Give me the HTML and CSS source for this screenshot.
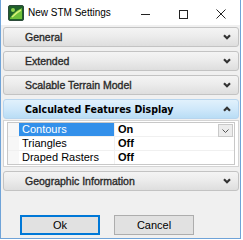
FILE: index.html
```html
<!DOCTYPE html>
<html lang="en">
<head>
  <meta charset="UTF-8" />
  <title>New STM Settings</title>
  <link rel="stylesheet" href="styles.css">
</head>
<body>

  <div class="window">
    <!-- Barra de titulo -->
    <div class="titlebar">
      <svg class="app-icon" width="16" height="16" viewBox="0 0 16 16">
        <rect x="0.5" y="0.5" width="15" height="15" rx="1.5" fill="#1f5f2a" stroke="#2c4b3a"/>
        <path d="M2 13 C5 9 7 6 14 3 L14 14 L2 14 Z" fill="#6fbf3a"/>
        <path d="M4 12 C7 9 9 7 13 5" stroke="#d8f07a" stroke-width="1.5" fill="none"/>
        <circle cx="5" cy="5" r="2" fill="#8fd24c"/>
      </svg>
      <span class="title">New STM Settings</span>
      <div class="caption-btns">
        <svg width="10" height="10" viewBox="0 0 10 10"><line x1="1" y1="5.5" x2="10" y2="5.5" stroke="#222" stroke-width="1"/></svg>
        <svg width="10" height="10" viewBox="0 0 10 10"><rect x="1.5" y="1.5" width="8" height="8" fill="none" stroke="#222" stroke-width="1"/></svg>
        <svg width="10" height="10" viewBox="0 0 10 10"><path d="M0.5 0.5 L9.5 9.5 M9.5 0.5 L0.5 9.5" stroke="#222" stroke-width="1"/></svg>
      </div>
    </div>

    <div class="content">
      <div class="section">General <svg class="chev" viewBox="0 0 8 6"><polyline points="1,1.2 4,4.2 7,1.2"/></svg></div>
      <div class="section">Extended <svg class="chev" viewBox="0 0 8 6"><polyline points="1,1.2 4,4.2 7,1.2"/></svg></div>
      <div class="section">Scalable Terrain Model <svg class="chev" viewBox="0 0 8 6"><polyline points="1,1.2 4,4.2 7,1.2"/></svg></div>
      <div class="section open">Calculated Features Display <svg class="chev" viewBox="0 0 8 6"><polyline points="1,4.8 4,1.8 7,4.8"/></svg></div>

      <!-- Rejilla de propiedades -->
      <div class="panel">
        <div class="grid">
          <div class="row">
            <div class="gutter"></div>
            <div class="name selected">Contours</div>
            <div class="value">On
              <span class="drop"><svg width="7" height="4" viewBox="0 0 7 4"><polyline points="0.5,0.5 3.5,3.5 6.5,0.5" fill="none" stroke="#555" stroke-width="1"/></svg></span>
            </div>
          </div>
          <div class="row">
            <div class="gutter"></div>
            <div class="name">Triangles</div>
            <div class="value">Off</div>
          </div>
          <div class="row">
            <div class="gutter"></div>
            <div class="name">Draped Rasters</div>
            <div class="value">Off</div>
          </div>
        </div>
      </div>

      <div class="section">Geographic Information <svg class="chev" viewBox="0 0 8 6"><polyline points="1,1.2 4,4.2 7,1.2"/></svg></div>

      <div class="buttons">
        <button class="btn default">Ok</button>
        <button class="btn">Cancel</button>
      </div>
    </div>
  </div>

</body>
</html>
```

FILE: styles.css
```css
/* Estilos generales */
body {
  margin: 0;
  background: #fff;
  font-family: "Liberation Sans", Arial, sans-serif;
}

/* Ventana */
.window {
  width: 239px;
  height: 238px;
  border: 1px solid #6fa3d8;
  border-top: none;
  background: #f0f0f0;
  display: flex;
  flex-direction: column;
}

.titlebar {
  height: 25px;
  background: #fff;
  display: flex;
  align-items: center;
  padding-left: 7px;
}
.app-icon {
  margin-top: 1px;
}
.title {
  margin-left: 4px;
  font-size: 10px;
  color: #000;
}
.caption-btns {
  margin-left: auto;
  display: flex;
  gap: 28px;
  padding-right: 14px;
  margin-top: 2px;
}

.content {
  padding: 2px 1px 0 2px;
  display: flex;
  flex-direction: column;
  gap: 4px;
}

/* Cabeceras del acordeon */
.section {
  height: 18px;
  border: 1px solid #c3c3c3;
  border-radius: 3px;
  background: linear-gradient(#f4f4f4, #ececec 45%, #dedede);
  display: flex;
  align-items: center;
  padding: 0 7px 0 21px;
  font-size: 10.5px;
  color: #2a2a2a;
  -webkit-text-stroke: 0.35px #2a2a2a;
}
.section.open {
  background: linear-gradient(#e1f1fc, #cfe8fa 50%, #b9ddf5);
  border-color: #b7d5ee;
  color: #000;
  -webkit-text-stroke: 0;
  font-family: "DejaVu Sans Condensed", "DejaVu Sans", sans-serif;
  font-weight: bold;
  margin-bottom: -3px;
}
.chev {
  margin-left: auto;
  width: 8px;
  height: 6px;
}
.chev polyline {
  fill: none;
  stroke: #333;
  stroke-width: 2.2;
}

/* Panel con rejilla */
.panel {
  border: 1px solid #d4d4d4;
  background: #fff;
  padding: 1px 3px;
}
.grid {
  border: 1px solid #c8c8c8;
  background: #fff;
  font-size: 11px;
}
.row {
  display: flex;
  height: 13px;
  border-bottom: 1px solid #f0f0f0;
}
.row:last-child {
  border-bottom: none;
}
.gutter {
  width: 11px;
  background: #f7f7f7;
}
.name {
  width: 92px;
  padding-left: 3px;
  line-height: 13px;
  border-right: 1px solid #f0f0f0;
  color: #000;
}
.name.selected {
  background: #3390ea;
  color: #fff;
}
.value {
  flex: 1;
  padding-left: 3px;
  line-height: 13px;
  font-weight: bold;
  display: flex;
}
.drop {
  margin-left: auto;
  width: 13px;
  height: 11px;
  margin-top: 1px;
  margin-right: 1px;
  border: 1px solid #c9c9c9;
  background: #ececec;
  display: flex;
  align-items: center;
  justify-content: center;
}

/* Botones inferiores */
.buttons {
  display: flex;
  gap: 14px;
  padding: 20px 0 0 17px;
}
.btn {
  width: 80px;
  height: 20px;
  border: 1px solid #adadad;
  background: #e1e1e1;
  font-family: "Liberation Sans", Arial, sans-serif;
  font-size: 11px;
  color: #000;
  padding: 0;
}
.btn.default {
  border: 2px solid #0078d7;
}
```
